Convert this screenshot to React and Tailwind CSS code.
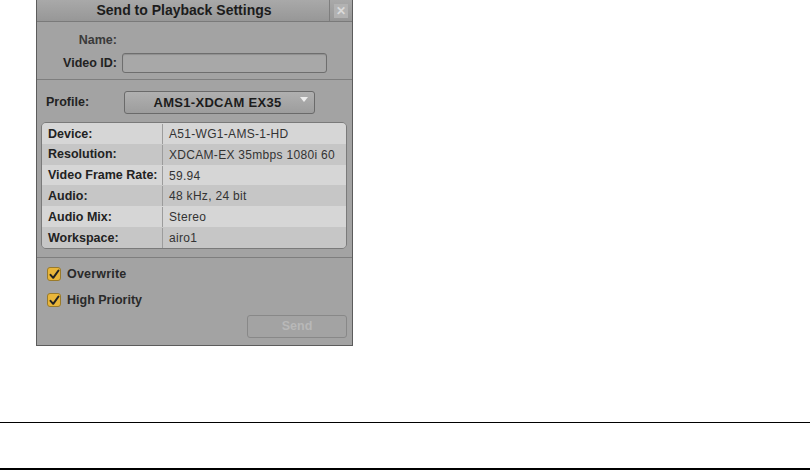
import React from "react";

const rows = [
  ["Device:", "A51-WG1-AMS-1-HD"],
  ["Resolution:", "XDCAM-EX 35mbps 1080i 60"],
  ["Video Frame Rate:", "59.94"],
  ["Audio:", "48 kHz, 24 bit"],
  ["Audio Mix:", "Stereo"],
  ["Workspace:", "airo1"],
];

function Check() {
  return (
    <div className="w-[14px] h-[14px] rounded-[3px] bg-[#e9b63a] border border-[#9a7a2a] flex items-center justify-center">
      <svg width="11" height="11" viewBox="0 0 11 11">
        <path d="M1.5 5.8 L4.2 8.8 L9.5 1.5" fill="none" stroke="#222" strokeWidth="2" strokeLinecap="round" strokeLinejoin="round" />
      </svg>
    </div>
  );
}

export default function App() {
  return (
    <div className="w-[810px] h-[470px] bg-white overflow-hidden" style={{ fontFamily: '"Liberation Sans", Arial, sans-serif' }}>
      <div className="ml-[36px] w-[317px] h-[346px] bg-[#a3a3a3] border-x border-b border-[#5c5c5c] flex flex-col">
        {/* title bar */}
        <div className="h-[22px] flex border-b border-[#7a7a7a] bg-gradient-to-b from-[#a9a9a9] to-[#979797]">
          <div className="flex-1 flex items-center justify-center text-[14px] font-bold text-[#1c1c1c] pl-[2px]">
            Send to Playback Settings
          </div>
          <div className="w-[23px] border-l border-[#7e7e7e] flex items-center justify-center">
            <div className="w-[14px] h-[14px] bg-[#b2b2b2] flex items-center justify-center">
              <span className="text-[#dadada] text-[12px] font-bold leading-none">✕</span>
            </div>
          </div>
        </div>
        {/* name / video id */}
        <div className="h-[58px] border-b border-[#7e7e7e] pt-[10px]">
          <div className="flex items-center h-[16px]">
            <div className="w-[80px] text-right text-[12.5px] font-bold text-[#3a3a3a]">Name:</div>
          </div>
          <div className="flex items-center mt-[5px]">
            <div className="w-[80px] text-right text-[12.5px] font-bold text-[#222]">Video ID:</div>
            <div className="ml-[5px] w-[205px] h-[20px] rounded-[3px] border border-[#6e6e6e] bg-[#a8a8a8] shadow-[inset_0_1px_1px_rgba(0,0,0,0.15)]" />
          </div>
        </div>
        {/* profile */}
        <div className="flex items-center h-[33px] pt-[12px]">
          <div className="w-[87px] pl-[9px] text-[12.5px] font-bold text-[#222]">Profile:</div>
          <div className="relative w-[191px] h-[23px] rounded-[3px] border border-[#6a6a6a] bg-gradient-to-b from-[#b0b0b0] to-[#9d9d9d] flex items-center justify-center">
            <span className="text-[13px] font-bold text-[#1c1c1c] tracking-[0.3px] mr-[4px]">AMS1-XDCAM EX35</span>
            <svg className="absolute right-[6px] top-[5px]" width="8" height="5" viewBox="0 0 8 5">
              <path d="M0 0 H8 L4 5 Z" fill="#eee" />
            </svg>
          </div>
        </div>
        {/* table */}
        <div className="mt-[9px] mx-[4px] w-[306px] h-[127px] rounded-[5px] border border-[#7a7a7a] overflow-hidden flex flex-col">
          {rows.map(([k, v], i) => (
            <div key={k} className={`flex-1 flex pt-[1px] ${i % 2 === 0 ? "bg-[#d6d6d6]" : "bg-[#c6c6c6]"}`}>
              <div className="w-[121px] pl-[6px] flex items-center text-[12.5px] font-bold text-[#222] border-r border-[#9c9c9c]">{k}</div>
              <div className="flex-1 pl-[6px] flex items-center text-[12px] tracking-[0.3px] text-[#333] whitespace-nowrap">{v}</div>
            </div>
          ))}
        </div>
        <div className="mt-[8px] border-b border-[#7e7e7e]" />
        {/* checkboxes */}
        <div className="flex items-center mt-[7px] ml-[10px] gap-[6px]">
          <Check />
          <span className="text-[12.5px] font-bold text-[#2a2a2a] tracking-[0.2px]">Overwrite</span>
        </div>
        <div className="flex items-center mt-[7px] ml-[10px] gap-[6px]">
          <Check />
          <span className="text-[12.5px] font-bold text-[#2a2a2a]">High Priority</span>
        </div>
        <div className="flex justify-end mt-[5px] mr-[5px]">
          <div className="w-[100px] h-[23px] rounded-[3px] border border-[#888] bg-[#a3a3a3] flex items-center justify-center text-[12.5px] font-bold text-[#b8b8b8]">
            Send
          </div>
        </div>
      </div>
      <div className="mt-[76px] h-px bg-black" />
      <div className="mt-[45px] h-[2px] bg-black" />
    </div>
  );
}
